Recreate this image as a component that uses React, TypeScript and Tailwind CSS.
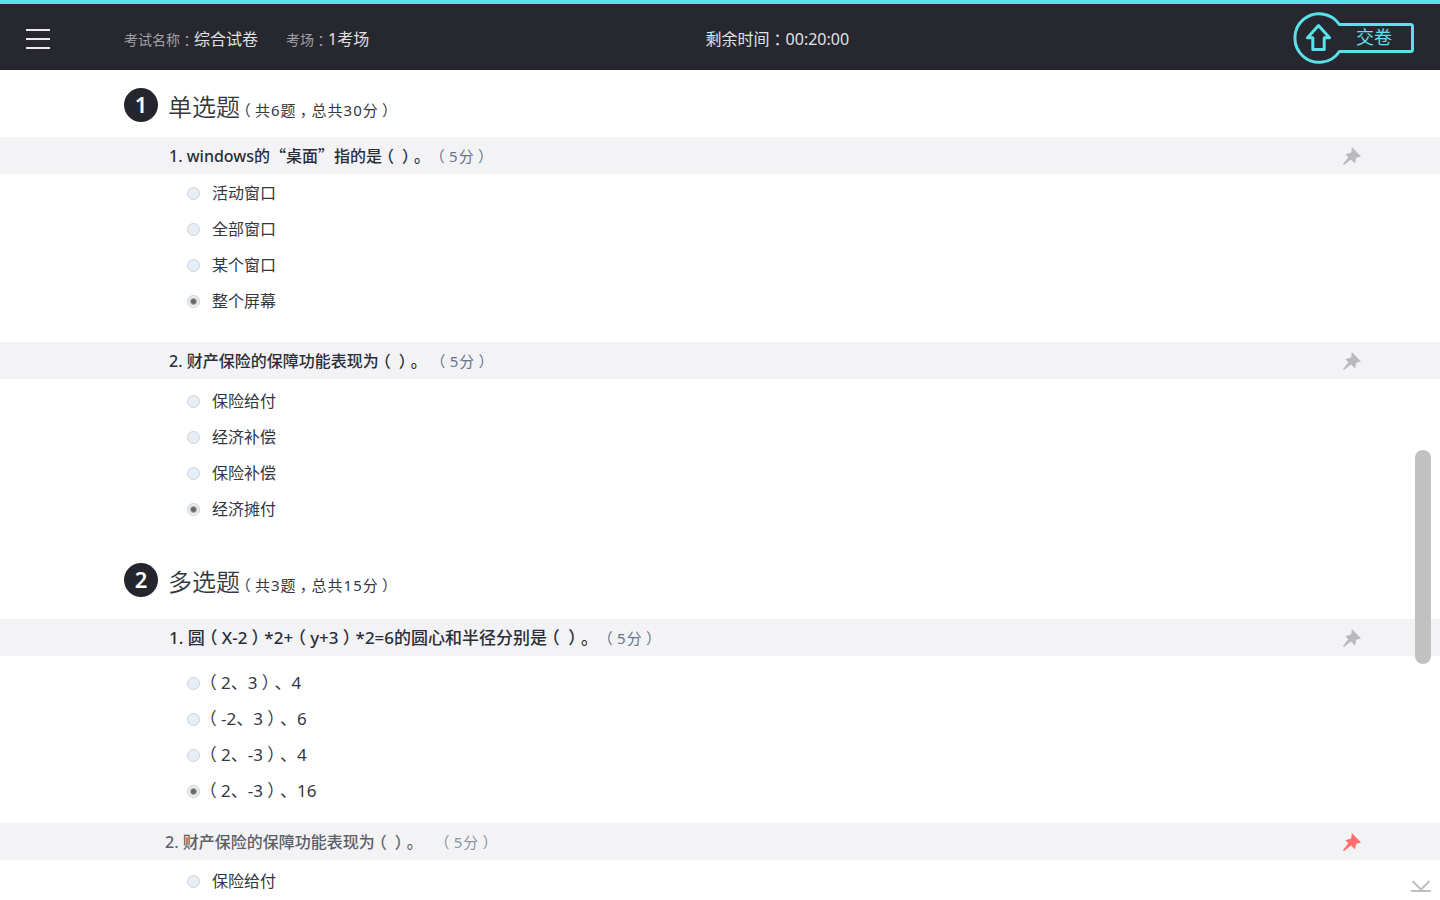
import React from "react";

type Question = {
  no: number;
  text: string;
  points: string;
  answers: string[];
  selected?: number;
  pinned?: boolean;
  titleStyle: string;
  listStyle: string;
  answerStyle: string;
};

type Section = {
  title: string;
  summary: string;
  headStyle: string;
  questions: Question[];
};

const sections: Section[] = [
  {
    title: "单选题",
    summary: "（共6题，总共30分）",
    headStyle: "pt-[18px] pb-[15px]",
    questions: [
      {
        no: 1,
        text: "windows的“桌面”指的是（）。",
        points: "（5分）",
        answers: ["活动窗口", "全部窗口", "某个窗口", "整个屏幕"],
        selected: 3,
        titleStyle: "gap-1 text-base",
        listStyle: "pt-px pb-[23px]",
        answerStyle: "gap-3 text-base",
      },
      {
        no: 2,
        text: "财产保险的保障功能表现为（）。",
        points: "（5分）",
        answers: ["保险给付", "经济补偿", "保险补偿", "经济摊付"],
        selected: 3,
        titleStyle: "gap-2 text-base",
        listStyle: "pt-1",
        answerStyle: "gap-3 text-base",
      },
    ],
  },
  {
    title: "多选题",
    summary: "（共3题，总共15分）",
    headStyle: "pt-9 pb-[22px]",
    questions: [
      {
        no: 1,
        text: "圆（X-2）*2+（y+3）*2=6的圆心和半径分别是（）。",
        points: "（5分）",
        answers: ["（2、3）、4", "（-2、3）、6", "（2、-3）、4", "（2、-3）、16"],
        selected: 3,
        titleStyle: "gap-1 text-[17px]",
        listStyle: "pt-[9px] pb-[14px]",
        answerStyle: "gap-1 text-[17px]",
      },
      {
        no: 2,
        text: "财产保险的保障功能表现为（）。",
        points: "（5分）",
        answers: ["保险给付"],
        pinned: true,
        titleStyle: "gap-4 text-base opacity-75 -ml-1",
        listStyle: "pt-[3px]",
        answerStyle: "gap-3 text-base",
      },
    ],
  },
];

// Full width punctuation is centred in its own square, curly quotes take the CJK face
const Words = ({ text }: { text: string }) => (
  <span className="whitespace-nowrap">
    {text.split(/([（）：，“”])/).map((part, index) => {
      if (/^[（）：，]$/.test(part)) {
        return (
          <span
            key={index}
            className="inline-block w-[1em] text-center [font-feature-settings:'halt']"
          >
            {part}
          </span>
        );
      }
      if (/^[“”]$/.test(part)) {
        return (
          <span key={index} className="font-['Noto_Sans_CJK_SC',sans-serif]">
            {part}
          </span>
        );
      }
      return part;
    })}
  </span>
);

const Pin = ({ active }: { active?: boolean }) => (
  <button
    type="button"
    aria-label="标记"
    aria-pressed={!!active}
    className={active ? "text-[#ff6e6e]" : "text-[#bababc]"}
  >
    <svg width="18" height="18" viewBox="0 0 18 18" fill="currentColor">
      <path d="M8.8 0 18 9.4 13.2 10.8 12 16.4 8 12.6 1 18 0 17 5.4 10.2 2.4 7.2 8.2 5.4Z" />
    </svg>
  </button>
);

const Header = () => (
  <header className="flex items-center h-[70px] border-t-4 border-[#58e1eb] bg-[#27272f] text-[#e2e2e4]">
    <div className="flex items-center w-[49%] pt-1 shrink-0">
      <button
        type="button"
        aria-label="菜单"
        className="ml-[26px] mr-[74px] flex flex-col gap-[7px] w-6"
      >
        <span className="h-0.5 w-full bg-[#ebe9ee]" />
        <span className="h-0.5 w-full bg-[#ebe9ee]" />
        <span className="h-0.5 w-full bg-[#ebe9ee]" />
      </button>
      <p className="flex items-baseline">
        <span className="text-sm text-[#a2a2a6]">
          <Words text="考试名称：" />
        </span>
        <Words text="综合试卷" />
      </p>
      <p className="flex items-baseline ml-7">
        <span className="text-sm text-[#a2a2a6]">
          <Words text="考场：" />
        </span>
        <Words text="1考场" />
      </p>
    </div>
    <p className="flex-1 pt-1">
      <Words text="剩余时间：00:20:00" />
    </p>
    <button
      type="button"
      className="relative w-[121px] h-[52px] mt-0.5 mr-[26px] pl-[63px] pb-0.5 text-left text-lg text-[#5be1ea]"
    >
      <svg
        className="absolute inset-0"
        width="121"
        height="52"
        viewBox="0 0 121 52"
        fill="none"
        stroke="currentColor"
        strokeWidth="3"
        strokeLinejoin="round"
      >
        <path d="M46.4 12.5A24.3 24.3 0 1 0 46.4 39.5H118a1.5 1.5 0 0 0 1.5-1.5V14a1.5 1.5 0 0 0-1.5-1.5Z" />
        <path d="M25.5 13.5 14.5 25.8H19.8V37.5H31.2V25.8H36.5Z" />
      </svg>
      交卷
    </button>
  </header>
);

const App = () => {
  return (
    <div className="relative min-h-screen bg-white text-base text-[#34373f] font-['Noto_Sans','Noto_Sans_CJK_SC',sans-serif] [text-spacing-trim:space-all]">
      <Header />

      <main>
        {sections.map((section, s) => (
          <section key={section.title}>
            <div className={`flex items-center pl-[124px] ${section.headStyle}`}>
              <span className="flex items-center justify-center w-[34px] h-[34px] pb-0.5 rounded-full bg-[#25252d] text-white text-[22px] font-semibold">
                {s + 1}
              </span>
              <div className="flex items-baseline ml-2.5 h-[34px]">
                <h2 className="text-2xl font-[350] leading-[38px]">
                  {section.title}
                </h2>
                <span className="text-[15px] tracking-[1px]">
                  <Words text={section.summary} />
                </span>
              </div>
            </div>

            {section.questions.map((question, q) => (
              <fieldset key={q} className="min-w-0">
                <legend className="flex items-center justify-between w-full h-[37px] pl-[169px] pr-[79px] bg-[#f3f3f5]">
                  <span
                    className={`flex items-baseline text-[#2a2e38] ${question.titleStyle}`}
                  >
                    <span className="font-medium">
                      <Words text={`${question.no}. ${question.text}`} />
                    </span>
                    <span className="text-[15px] tracking-[1px] text-[#66748a]">
                      <Words text={question.points} />
                    </span>
                  </span>
                  <Pin active={question.pinned} />
                </legend>
                <div className={question.listStyle}>
                  {question.answers.map((answer, a) => (
                    <label
                      key={answer}
                      className={`flex items-center h-9 w-fit pl-[187px] ${question.answerStyle}`}
                    >
                      <input
                        type="radio"
                        name={`question-${s}-${q}`}
                        defaultChecked={question.selected === a}
                        className="appearance-none w-[13px] h-[13px] rounded-full border border-[#cdd1d4] bg-[#e6eff7] checked:bg-[radial-gradient(circle,#6b6762_2px,#e9eff3_4px)]"
                      />
                      <Words text={answer} />
                    </label>
                  ))}
                </div>
              </fieldset>
            ))}
          </section>
        ))}
      </main>

      {/* Scroll thumb and jump to end */}
      <div className="absolute right-[9px] top-1/2 w-4 h-[214px] rounded-full bg-[#c1c1c1]" />
      <button
        type="button"
        aria-label="到底部"
        className="absolute right-[9px] bottom-2 text-[#bfbfbf]"
      >
        <svg
          width="20"
          height="12"
          viewBox="0 0 20 12"
          fill="none"
          stroke="currentColor"
          strokeWidth="2"
        >
          <path d="M1.5 1 10 9.5 18.5 1" />
          <path d="M0 11H20" />
        </svg>
      </button>
    </div>
  );
};

export default App;
